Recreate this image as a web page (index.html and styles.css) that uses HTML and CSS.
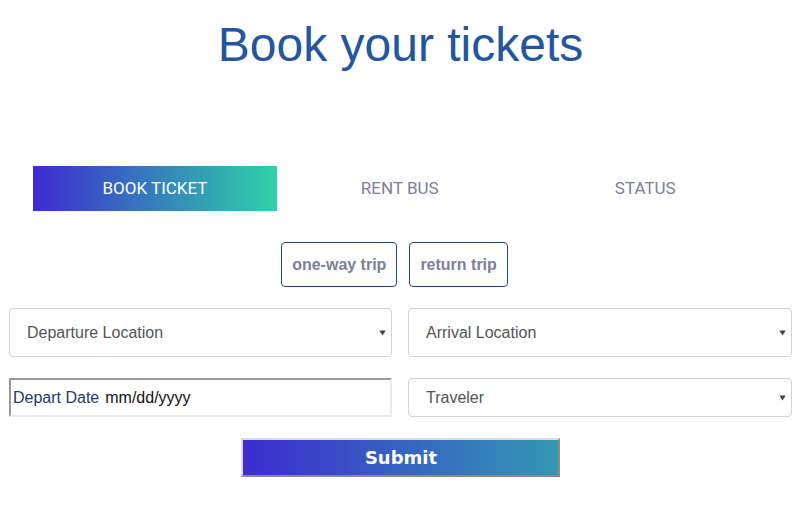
FILE: index.html
```html
<!DOCTYPE html>
<html lang="en">
<head>
<meta charset="utf-8">
<title>Book your tickets</title>
<link rel="stylesheet" href="styles.css">
</head>
<body>
<div class="page">
  <h1 class="title">Book your tickets</h1>

  <nav class="tabs">
    <a class="tab tab-active" href="#">BOOK TICKET</a>
    <a class="tab" href="#">RENT BUS</a>
    <a class="tab" href="#">STATUS</a>
  </nav>

  <div class="trip">
    <button class="trip-btn" type="button">one-way trip</button>
    <button class="trip-btn" type="button">return trip</button>
  </div>

  <form class="fields">
    <div class="field field-tall">
      <select class="select"><option>Departure Location</option></select>
      <svg class="caret" width="7" height="6" viewBox="0 0 7 6"><path d="M0.3 0.5H6.7L3.5 5.6Z" fill="#444"/></svg>
    </div>
    <div class="field field-tall">
      <select class="select"><option>Arrival Location</option></select>
      <svg class="caret" width="7" height="6" viewBox="0 0 7 6"><path d="M0.3 0.5H6.7L3.5 5.6Z" fill="#444"/></svg>
    </div>
    <div class="date-box">
      <span class="date-label">Depart Date</span>
      <span class="date-value">mm/dd/yyyy</span>
    </div>
    <div class="field field-short">
      <select class="select"><option>Traveler</option></select>
      <svg class="caret" width="7" height="6" viewBox="0 0 7 6"><path d="M0.3 0.5H6.7L3.5 5.6Z" fill="#444"/></svg>
    </div>
  </form>

  <div class="submit-row">
    <button class="submit" type="button">Submit</button>
  </div>
</div>
</body>
</html>
```

FILE: styles.css
```css
html, body {
  margin: 0;
  padding: 0;
  background: #fff;
}

body {
  font-family: "Liberation Sans", Arial, sans-serif;
}

.page {
  padding: 0 14px 0 9px;
}

.title {
  margin: 17px 0 0;
  font-size: 48px;
  line-height: 56px;
  font-weight: normal;
  text-align: center;
  color: #2455a0;
}

.tabs {
  margin: 93px 24px 0;
  display: grid;
  grid-template-columns: 244px 1fr 1fr;
  height: 45px;
}

.tab {
  display: flex;
  align-items: center;
  justify-content: center;
  padding-bottom: 2px;
  font-family: Roboto, "Liberation Sans", sans-serif;
  font-size: 17px;
  color: #7b809a;
  text-decoration: none;
}

.tab-active {
  color: #fff;
  background: linear-gradient(to right, #3d2bd1, #2ed3a9);
}

.trip {
  margin-top: 31px;
  display: flex;
  justify-content: center;
}

.trip-btn {
  height: 45px;
  margin: 0 12px 0 0;
  padding: 0 10px;
  border: 1px solid #1c4a7a;
  border-radius: 4px;
  background: #fff;
  font-family: "Liberation Sans", Arial, sans-serif;
  font-weight: bold;
  font-size: 16px;
  color: #7b809b;
}

.fields {
  margin: 21px 0 0;
  display: grid;
  grid-template-columns: 383px 384px;
  column-gap: 16px;
  row-gap: 21px;
}

.field {
  position: relative;
}

.select {
  -webkit-appearance: none;
  appearance: none;
  display: block;
  width: 100%;
  margin: 0;
  padding: 0 0 0 17px;
  border: 1px solid #cfd2d6;
  border-radius: 4px;
  background: #fff;
  font-family: "Liberation Sans", Arial, sans-serif;
  font-size: 16px;
  color: #555;
}

.field-tall .select {
  height: 49px;
}

.field-short .select {
  height: 39px;
}

.caret {
  position: absolute;
  right: 6px;
  top: 50%;
  transform: translateY(-50%);
}

.date-box {
  box-sizing: border-box;
  height: 39px;
  display: flex;
  align-items: center;
  gap: 6px;
  padding: 0 2px;
  border-style: solid;
  border-width: 2px;
  border-color: #9a9a9a #ebebeb #ebebeb #9a9a9a;
  font-size: 16px;
  line-height: 18px;
}

.date-label {
  color: #1e3a66;
}

.date-value {
  color: #111;
}

.submit-row {
  margin-top: 21px;
  display: flex;
  justify-content: center;
}

.submit {
  width: 319px;
  height: 39px;
  border-style: solid;
  border-width: 2px;
  border-color: #dcdcdc #8a8a8a #8a8a8a #dcdcdc;
  background: linear-gradient(to right, #3d2bcf, #3198b4);
  font-family: "DejaVu Sans", Verdana, sans-serif;
  font-weight: bold;
  font-size: 18px;
  color: #fff;
  padding: 0 0 0 1px;
}
```
